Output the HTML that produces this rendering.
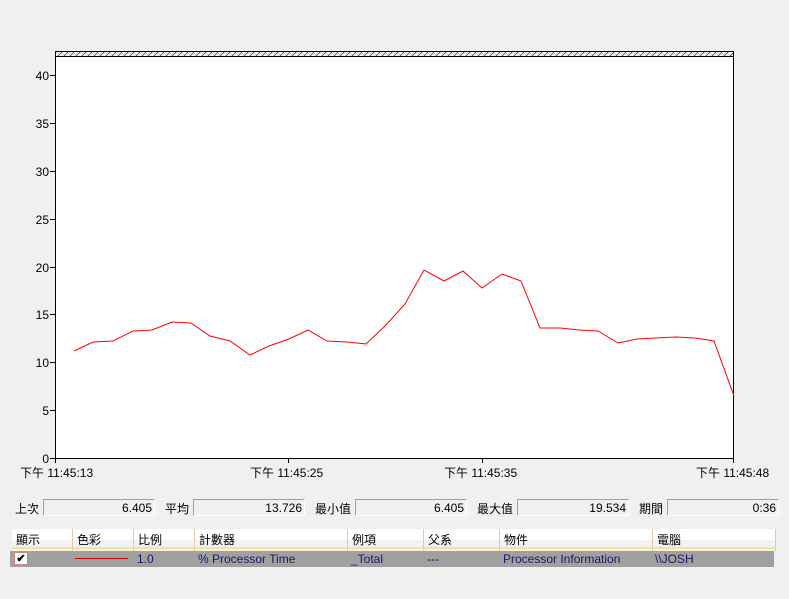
<html><head><style>
body{margin:0;width:789px;height:599px;background:#f0f0f0;font-family:"Liberation Sans","Noto Sans CJK TC",sans-serif;font-size:12px;color:#000;position:relative;overflow:hidden}
.a{position:absolute;white-space:nowrap}
.box{position:absolute;height:17px;border:1px solid #a0a0a0;border-right-color:#fff;border-bottom-color:#fff;background:#f0f0f0;text-align:right;line-height:17px;box-sizing:border-box;padding-right:2px}
.h{position:absolute;top:529px;height:22px;background:linear-gradient(#fff 0,#fff 50%,#f3f3f6 50%,#f3f3f6 82%,#f0e3a8 82%,#f0e3a8 92%,#fbf3d8 92%);line-height:22px;padding-left:4px;box-sizing:border-box;border-right:1px solid #e8c8a0}
</style></head><body>
<svg class="a" style="left:0;top:0" width="789" height="480">
<defs><pattern id="p" width="6" height="6" patternUnits="userSpaceOnUse"><path d="M0 6L6 0" stroke="#000" stroke-width="0.6"/></pattern></defs>
<rect x="55.5" y="51.5" width="678" height="5" fill="url(#p)" stroke="#000"/>
<rect x="55.5" y="56.5" width="678" height="402" fill="#fff" stroke="#000"/>
<g stroke="#000"><path d="M50 75.5h5M50 123.5h5M50 171.5h5M50 219.5h5M50 267.5h5M50 314.5h5M50 362.5h5M50 410.5h5M50 458.5h5M55.5 458v5M288.5 458v5M482.5 458v5M733.5 458v5"/></g>
<g font-size="12" text-anchor="end" font-family="Liberation Sans,sans-serif">
<text x="49" y="80">40</text><text x="49" y="128">35</text><text x="49" y="176">30</text><text x="49" y="224">25</text><text x="49" y="272">20</text><text x="49" y="319">15</text><text x="49" y="367">10</text><text x="49" y="415">5</text><text x="49" y="463">0</text></g>
<polyline fill="none" stroke="#f00" stroke-width="1" points="74,351 93,342 113,341 133,331 152,330 172,322 191,323 210,336 230,341 250,355 269,346 289,339 308,330 327,341 347,342 366,344 385,326 405,304 424,270 444,281 463,271 482,288 502,274 521,281 540,328 560,328 579,330 598,331 618,343 637,339 656,338 676,337 695,338 714,341 734,396"/>
</svg>
<div class="a" style="left:20px;top:464px">下午 11:45:13</div>
<div class="a" style="left:250px;top:464px">下午 11:45:25</div>
<div class="a" style="left:444px;top:464px">下午 11:45:35</div>
<div class="a" style="left:696px;top:464px">下午 11:45:48</div>
<div class="a" style="left:15px;top:500px">上次</div><div class="box" style="left:43px;top:499px;width:112px">6.405</div>
<div class="a" style="left:165px;top:500px">平均</div><div class="box" style="left:193px;top:499px;width:112px">13.726</div>
<div class="a" style="left:315px;top:500px">最小值</div><div class="box" style="left:355px;top:499px;width:112px">6.405</div>
<div class="a" style="left:477px;top:500px">最大值</div><div class="box" style="left:517px;top:499px;width:112px">19.534</div>
<div class="a" style="left:639px;top:500px">期間</div><div class="box" style="left:667px;top:499px;width:112px">0:36</div>
<div class="h" style="left:12px;width:61px">顯示</div>
<div class="h" style="left:73px;width:61px">色彩</div>
<div class="h" style="left:134px;width:61px">比例</div>
<div class="h" style="left:195px;width:153px">計數器</div>
<div class="h" style="left:348px;width:76px">例項</div>
<div class="h" style="left:424px;width:76px">父系</div>
<div class="h" style="left:500px;width:153px">物件</div>
<div class="h" style="left:653px;width:123px">電腦</div>
<div class="a" style="left:10px;top:551px;width:764px;height:16px;background:#a0a0a0"></div>
<div class="a" style="left:14px;top:552px;width:14px;height:13px;background:#fff;border:1px solid #c88;box-sizing:border-box;font-size:11px;line-height:12px;text-align:center;font-weight:bold">✔</div>
<div class="a" style="left:75px;top:558px;width:53px;height:1px;background:#c00"></div>
<div class="a" style="left:137px;top:552px;color:#1a1a6a">1.0</div>
<div class="a" style="left:198px;top:552px;color:#1a1a6a">% Processor Time</div>
<div class="a" style="left:351px;top:552px;color:#1a1a6a">_Total</div>
<div class="a" style="left:427px;top:552px;color:#1a1a6a">---</div>
<div class="a" style="left:503px;top:552px;color:#1a1a6a">Processor Information</div>
<div class="a" style="left:655px;top:552px;color:#1a1a6a">\\JOSH</div>
</body></html>
